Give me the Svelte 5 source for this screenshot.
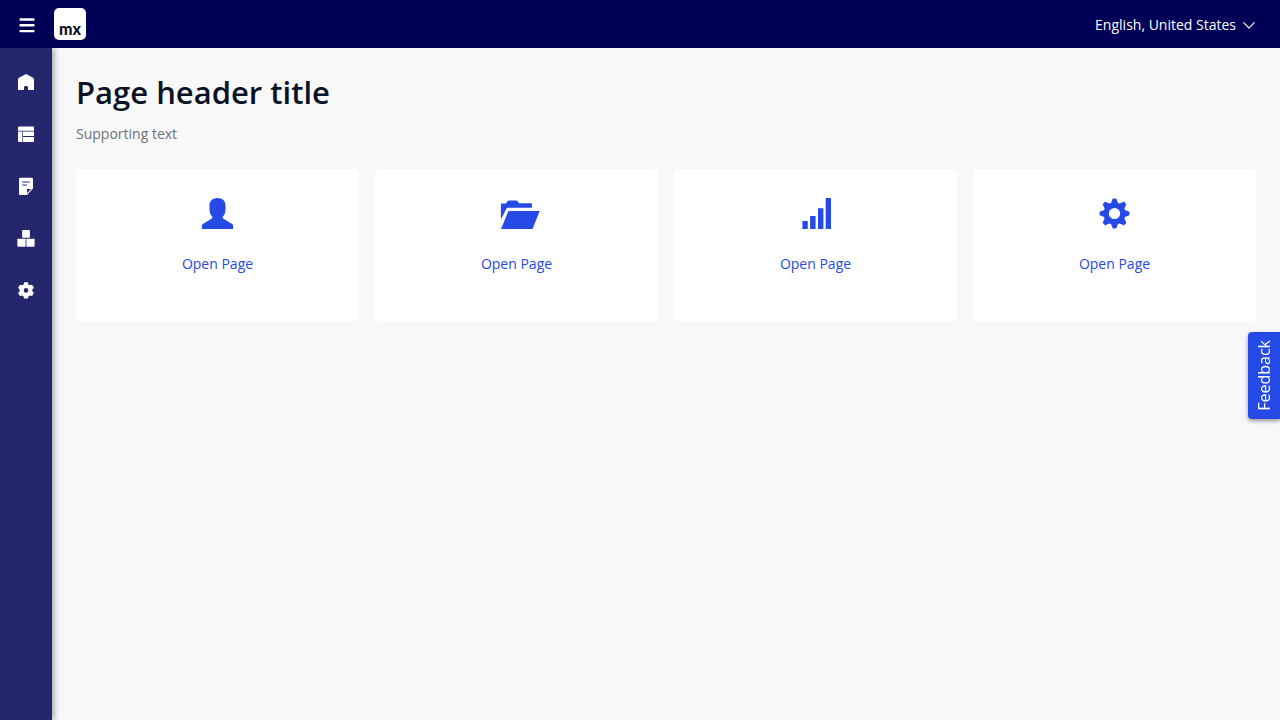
<script>
  const cards = ['user', 'folder', 'signal', 'cog'];
  const toothAngles = [0, 45, 90, 135, 180, 225, 270, 315];
  const nav = [
    { name: 'Home', icon: 'home' },
    { name: 'Layouts', icon: 'layout' },
    { name: 'Notes', icon: 'note' },
    { name: 'Modules', icon: 'modules' },
    { name: 'Settings', icon: 'settings' }
  ];
  let expanded = $state(false);
</script>

<div class="app">
  <header class="topbar">
    <button class="toggle" aria-label="Toggle navigation" aria-expanded={expanded} onclick={() => (expanded = !expanded)}>
      <svg width="16" height="18" viewBox="0 0 16 18" fill="#fff">
        <rect x="0.5" y="3.3" width="15" height="2.4" rx=".6" />
        <rect x="0.5" y="9.1" width="15" height="2.4" rx=".6" />
        <rect x="0.5" y="14.9" width="15" height="2.4" rx=".6" />
      </svg>
    </button>
    <a class="logo" href="#home">mx</a>
    <button class="language">
      <span>English, United States</span>
      <svg width="12" height="8" viewBox="0 0 12 8" fill="none" stroke="#fff" stroke-width="1.1" stroke-linecap="round" stroke-linejoin="round">
        <path d="M.7 1.7 6 7.2l5.3-5.5" />
      </svg>
    </button>
  </header>

  <div class="body">
    <nav class="sidebar" aria-label="Main">
      {#each nav as item}
        <a href="#{item.icon}" aria-label={item.name}>
          <svg width="18" height="18" viewBox="0 0 18 18" fill="#fff">
            {#if item.icon === 'home'}
              <path d="M9 1l7 3.7q1 .6 1 1.6V17h-6v-2.6a1.4 1.4 0 0 0-1.4-1.4H8.4a1.4 1.4 0 0 0-1.4 1.4V17H1V6.3q0-1 1-1.6z" />
            {:else if item.icon === 'layout'}
              <path d="M2 1.5h14q1 0 1 1v3.200H1V2.500q0-1 1-1zM1 6.600h4.400V17H2q-1 0-1-1zM6 6.600h11v4.500H6zM6 12h11v4q0 1-1 1H6z" />
            {:else if item.icon === 'note'}
              <path fill-rule="evenodd" d="M3.300.7h11.400q1.300 0 1.300 1.300v9.500L10 18H3.300Q2 18 2 16.700V2Q2 .7 3.300.7zM5.300 4.500v1.100h7.400V4.500zM5.300 7.500v1.100h4.500V7.500zM10 12v4.200L14 12z" />
            {:else if item.icon === 'modules'}
              <rect x="5.1" y="1" width="7.8" height="7.8" rx=".6" />
              <rect x="0.4" y="9.7" width="8.2" height="8" rx=".6" />
              <rect x="9.4" y="9.7" width="8.2" height="8" rx=".6" />
            {:else}
              <path fill-rule="evenodd" transform="translate(0 .4)" d="M7.200.8h3.600l.6 2.200 1.500.9 2.200-.6 1.800 3.100-1.600 1.700v1.800l1.600 1.700-1.800 3.100-2.200-.6-1.500.9-.6 2.200H7.200L6.600 15l-1.500-.9-2.200.6-1.800-3.100 1.600-1.700V8.100L1.100 6.400l1.800-3.100 2.200.6L6.600 3zM9 6.700a2.300 2.300 0 1 0 0 4.600 2.300 2.300 0 0 0 0-4.600z" />
            {/if}
          </svg>
        </a>
      {/each}
    </nav>

    <main>
      <h1>Page header title</h1>
      <p>Supporting text</p>
      <div class="cards">
        {#each cards as icon}
          <a class="card" href="#{icon}">
            <svg width="33" height="32" viewBox="0 0 33 32" fill="#264ae5">
              {#if icon === 'user'}
                <path d="M16.500 0c4.800 0 8 2.900 8 7.500v4c0 3.300-1.100 5.700-2.900 7.200 0 1.200.3 1.700 1.300 2.300l8.300 4.900q.9.600.9 1.600V31H.9v-3.500q0-1 .9-1.600l8.300-4.900c1-.6 1.300-1.100 1.300-2.300-1.800-1.500-2.900-3.900-2.900-7.200v-4C8.500 2.900 11.700 0 16.500 0z" />
              {:else if icon === 'folder'}
                <path d="M.9 5.500h5l1.700-2.200q.6-.8 1.600-.8h6.800q1 0 1.600.8l1.500 1.900h12.800v4.600H7.900q-1.200 0-1.700 1.100L.9 21.500z" />
                <path d="M9.200 13h30.500L32.500 31H1L8.100 13.700q.3-.7 1.100-.7z" />
              {:else if icon === 'signal'}
                <rect x="3.400" y="23" width="5.400" height="8" rx=".5" />
                <rect x="11.100" y="18" width="5.500" height="13" rx=".5" />
                <rect x="19" y="10.300" width="5.400" height="20.700" rx=".5" />
                <rect x="26.700" y="0" width="5.300" height="31" rx=".5" />
              {:else}
                <circle cx="16.500" cy="15.500" r="8.300" fill="none" stroke="#264ae5" stroke-width="5.400" />
                {#each toothAngles as angle}
                  <path transform="rotate({angle} 16.5 15.5)" d="M12.700 6l1.700-4.800q.2-.7.900-.7h2.400q.7 0 .9.700L20.300 6z" />
                {/each}
              {/if}
            </svg>
            <span>Open Page</span>
          </a>
        {/each}
      </div>
    </main>
  </div>

  <button class="feedback">Feedback</button>
</div>

<style>
  :global(body) {
    margin: 0;
    background: #f8f8f8;
  }
  .app {
    display: flex;
    flex-direction: column;
    min-height: 100vh;
    font-family: 'Open Sans', sans-serif;
    font-size: 14px;
    line-height: 20px;
  }
  button {
    border: 0;
    padding: 0;
    background: none;
    font: inherit;
    color: #fff;
    cursor: pointer;
  }
  a {
    text-decoration: none;
  }
  svg {
    display: block;
    overflow: visible;
  }
  .topbar {
    display: flex;
    align-items: center;
    height: 48px;
    box-sizing: border-box;
    padding: 0 25px 0 19px;
    background: #000056;
  }
  .logo {
    display: flex;
    align-items: flex-end;
    justify-content: center;
    width: 32px;
    height: 32px;
    box-sizing: border-box;
    margin-left: 19px;
    border-radius: 5px;
    background: #fff;
    color: #0a1325;
    font: 900 16px/22px Lato, sans-serif;
  }
  .language {
    display: flex;
    align-items: center;
    gap: 7px;
    margin-left: auto;
    padding-top: 2px;
  }
  .body {
    display: flex;
    flex: 1;
  }
  .sidebar {
    display: flex;
    flex-direction: column;
    flex: none;
    width: 52px;
    box-sizing: border-box;
    padding-top: 8px;
    background: #24276c;
    box-shadow: 2px 0 6px rgba(0, 0, 0, 0.35);
    clip-path: inset(0 -16px 0 0);
  }
  .sidebar a {
    display: flex;
    align-items: center;
    justify-content: center;
    height: 52px;
  }
  main {
    flex: 1;
    min-width: 0;
    padding: 24px;
  }
  h1 {
    margin: 0;
    color: #0a1325;
    font-size: 31px;
    font-weight: 600;
    line-height: 40px;
  }
  p {
    margin: 12px 0 25px;
    color: #6c717e;
  }
  .cards {
    display: grid;
    grid-template-columns: repeat(4, 1fr);
    gap: 16px;
  }
  .card {
    display: flex;
    flex-direction: column;
    align-items: center;
    gap: 24px;
    padding: 29px 24px 47px;
    border-radius: 4px;
    background: #fff;
    color: #264ae5;
  }
  .feedback {
    position: fixed;
    right: 0;
    top: 332px;
    width: 32px;
    height: 87px;
    border-radius: 4px 0 0 4px;
    background: #264ae5;
    box-shadow: 0 2px 4px rgba(0, 0, 0, 0.4);
    font-size: 16px;
    writing-mode: sideways-lr;
  }
</style>
